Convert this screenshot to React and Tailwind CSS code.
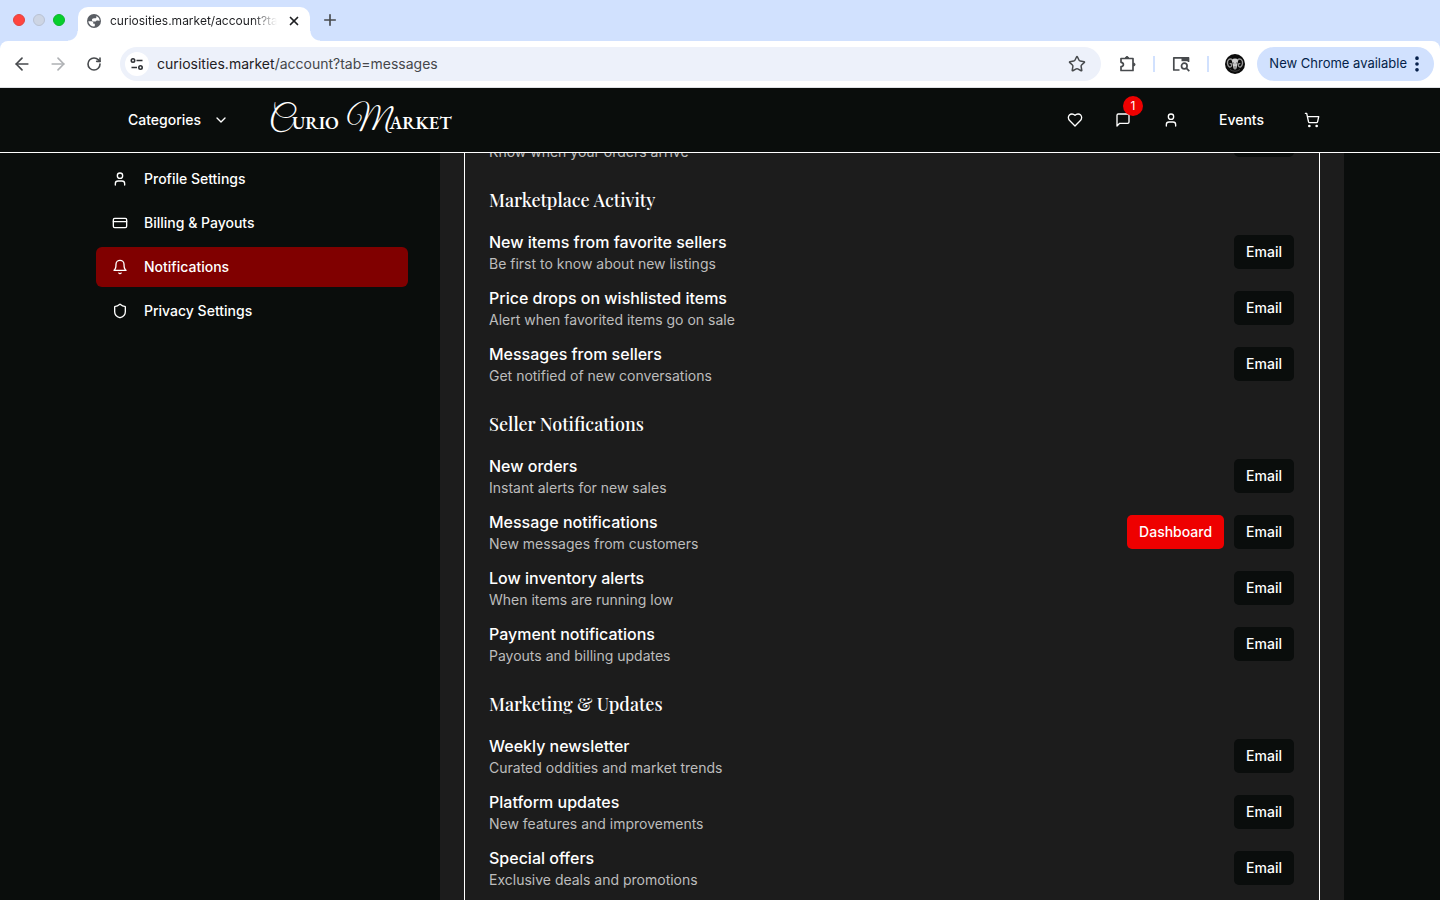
import {
  ArrowLeft, ArrowRight, RotateCw, X, Plus, Star, ChevronDown,
  User, ShoppingCart, CreditCard, Shield, EllipsisVertical,
} from "lucide-react";

const sections = [
  { rows: [[null, "Know when your orders arrive"]] },
  {
    title: "Marketplace Activity",
    rows: [
      ["New items from favorite sellers", "Be first to know about new listings"],
      ["Price drops on wishlisted items", "Alert when favorited items go on sale"],
      ["Messages from sellers", "Get notified of new conversations"],
    ],
  },
  {
    title: "Seller Notifications",
    rows: [
      ["New orders", "Instant alerts for new sales"],
      ["Message notifications", "New messages from customers", true],
      ["Low inventory alerts", "When items are running low"],
      ["Payment notifications", "Payouts and billing updates"],
    ],
  },
  {
    title: "Marketing & Updates",
    rows: [
      ["Weekly newsletter", "Curated oddities and market trends"],
      ["Platform updates", "New features and improvements"],
      ["Special offers", "Exclusive deals and promotions"],
    ],
  },
];

function LineIcon({ children }) {
  return (
    <svg width="16" height="16" viewBox="0 0 24 24" fill="none" stroke="currentColor" strokeWidth="2" strokeLinecap="round" strokeLinejoin="round">
      {children}
    </svg>
  );
}

function BellIcon() {
  return (
    <LineIcon>
      <path d="M6 8a6 6 0 0 1 12 0c0 7 3 9 3 9H3s3-2 3-9" />
      <path d="M10.3 21a1.94 1.94 0 0 0 3.4 0" />
    </LineIcon>
  );
}

function HeartIcon() {
  return (
    <LineIcon>
      <path d="M19 14c1.49-1.46 3-3.21 3-5.5A5.5 5.5 0 0 0 16.5 3c-1.76 0-3 .5-4.5 2-1.5-1.5-2.74-2-4.5-2A5.5 5.5 0 0 0 2 8.5c0 2.3 1.5 4.05 3 5.5l7 7Z" />
    </LineIcon>
  );
}

function MessageIcon() {
  return (
    <LineIcon>
      <path d="M21 15a2 2 0 0 1-2 2H7l-4 4V5a2 2 0 0 1 2-2h14a2 2 0 0 1 2 2z" />
    </LineIcon>
  );
}

const links = [
  ["Profile Settings", User],
  ["Billing & Payouts", CreditCard],
  ["Notifications", BellIcon],
  ["Privacy Settings", Shield],
];

function TuneIcon() {
  return (
    <svg width="14" height="12" viewBox="0 0 14 12" fill="none" stroke="#303236" strokeWidth="1.6">
      <circle cx="3" cy="2.5" r="1.7" />
      <path d="M6.5 2.5H12.5M1.5 9.5H7" />
      <circle cx="10.5" cy="9.5" r="1.7" />
    </svg>
  );
}

function GlobeIcon() {
  return (
    <svg width="14" height="14" viewBox="0 0 14 14">
      <circle cx="7" cy="7" r="7" fill="#5a5e64" />
      <path d="M1.3 7.2h3.2c1.3 0 1.8.8 1.8 1.8v.7h1.5v2.6a5.6 5.6 0 0 1-6.5-5.1zM7 4.2h1.2c.8 0 1.2-.6 1.2-1.3V1.9a5.6 5.6 0 0 1 3.2 5.2c-.5-.5-1-.7-1.7-.7H9.7L8.6 7.4H6.2c-.8 0-1.2-.6-1.2-1.3 0-1.2.7-1.9 2-1.9z" fill="#fff" />
    </svg>
  );
}

function PuzzleIcon() {
  return (
    <svg width="18" height="18" viewBox="0 0 18 18" fill="none" stroke="#474a4d" strokeWidth="1.7" strokeLinejoin="round">
      <path d="M2 3.5H14V15.5H2V11.7C3.6 11.5 4.4 10.7 4.4 9.5S3.6 7.5 2 7.3Z" />
      <path d="M6.5 3a1.5 1.5 0 0 1 3 0zM14.5 8a1.5 1.5 0 0 1 0 3z" fill="#474a4d" strokeWidth="1" />
    </svg>
  );
}

function PanelSearchIcon() {
  return (
    <svg width="18" height="16" viewBox="0 0 18 16" fill="none" stroke="#474a4d" strokeWidth="1.7">
      <path d="M7.5 14H1.8V1.8H16.5V6" strokeLinejoin="round" />
      <path d="M9.5 1.2h7.5v4H9.5z" fill="#474a4d" stroke="none" />
      <circle cx="12.3" cy="10" r="2.8" />
      <path d="M14.3 12.2L17.3 15.2" />
    </svg>
  );
}

function Avatar() {
  return (
    <svg width="20" height="20" viewBox="0 0 20 20">
      <circle cx="10" cy="10" r="10" fill="#0b0b0b" />
      <path d="M6.5 5.5Q10 3.5 13.5 5.5L12.5 9L11.5 14.5Q10 16.5 8.5 14.5L7.5 9Z" fill="#d0d0d0" />
      <path d="M7.5 6C5 3.5 2 6 2.5 9.5S5.5 14 6.5 12S5.5 9 4.8 10M12.5 6C15 3.5 18 6 17.5 9.5S14.5 14 13.5 12S14.5 9 15.2 10" fill="none" stroke="#979797" strokeWidth="1.4" />
      <path d="M8 8.5l1.3 1.2M12 8.5l-1.3 1.2M10 12v3" stroke="#333" strokeWidth=".7" />
      <path d="M5 15.5Q10 19 15 15.5" fill="none" stroke="#555" strokeWidth=".8" />
    </svg>
  );
}

function Browser() {
  return (
    <div className="shrink-0 bg-[#d1e1fe] text-[#1f2023]">
      <div className="flex h-[41px] items-end">
        <div className="flex h-10 items-center gap-2 self-start pr-3 pl-[13px]">
          <span className="size-3 rounded-full border border-[#e0443e] bg-[#ff453f]" />
          <span className="size-3 rounded-full border border-[#b9c2d3] bg-[#cdd5e4]" />
          <span className="size-3 rounded-full border border-[#0eb52c] bg-[#06cf2c]" />
        </div>
        <div className="relative ml-px flex h-[34px] w-[232px] items-center rounded-t-[10px] bg-white pr-2 pb-[6px] pl-[9px]">
          <span className="absolute bottom-0 -left-[10px] size-[10px] bg-[radial-gradient(circle_at_0_0,transparent_9px,white_10px)]" />
          <span className="absolute -right-[10px] bottom-0 size-[10px] bg-[radial-gradient(circle_at_100%_0,transparent_9px,white_10px)]" />
          <GlobeIcon />
          <span className="ml-[9px] w-[167px] overflow-hidden bg-linear-to-r from-[#1f2023] from-85% to-transparent bg-clip-text text-xs whitespace-nowrap text-transparent">
            curiosities.market/account?tab=messages
          </span>
          <button aria-label="Close tab" className="ml-auto flex size-4 items-center justify-center">
            <X size={14} strokeWidth={3} />
          </button>
        </div>
        <button aria-label="New tab" className="ml-3 flex h-10 w-4 items-center justify-center self-start">
          <Plus size={18} strokeWidth={2.2} color="#474a4d" className="shrink-0" />
        </button>
      </div>
      <div className="flex h-[47px] items-center rounded-t-[8px] border-b border-[#dfe1e5] bg-white pr-[6px] pl-3 text-[#474a4d]">
        <button aria-label="Back" className="w-5"><ArrowLeft size={20} strokeWidth={2} /></button>
        <button aria-label="Forward" className="ml-4 w-5 text-[#afb1b4]"><ArrowRight size={20} strokeWidth={2} /></button>
        <button aria-label="Reload" className="ml-4 flex w-5 justify-center"><RotateCw size={16} strokeWidth={2.4} /></button>
        <div className="ml-4 flex h-[34px] flex-1 items-center rounded-full bg-[#edf1fa] pr-[15px] pl-[5px]">
          <button aria-label="Site information" className="flex size-6 shrink-0 items-center justify-center rounded-full bg-white"><TuneIcon /></button>
          <a href="#address" className="ml-2 flex-1 text-sm whitespace-nowrap text-[#45474a]">
            <span className="text-[#1f2023]">curiosities.market</span>/account?tab=messages
          </a>
          <button aria-label="Bookmark"><Star size={18} strokeWidth={2} /></button>
        </div>
        <button aria-label="Extensions" className="ml-[18px]"><PuzzleIcon /></button>
        <span className="ml-4 h-4 w-[2px] bg-[#d1e1fe]" />
        <button aria-label="Search panel" className="ml-[17px]"><PanelSearchIcon /></button>
        <span className="ml-[17px] h-4 w-[2px] bg-[#d1e1fe]" />
        <button aria-label="Profile" className="ml-4"><Avatar /></button>
        <button className="ml-3 flex h-[34px] items-center rounded-full bg-[#d1e1fe] pr-[7px] pl-3 text-[13px] text-[#041e49]">
          New Chrome available
          <EllipsisVertical size={20} strokeWidth={2.4} />
        </button>
      </div>
    </div>
  );
}

function SiteHeader() {
  return (
    <header className="flex h-[65px] shrink-0 items-center border-b border-white pr-[120px] pl-32 text-sm font-medium">
      <button className="flex items-center gap-3">
        Categories
        <ChevronDown size={16} />
      </button>
      <a href="#home" className="ml-10 flex items-baseline gap-2 pt-1 font-['EB_Garamond','Liberation_Serif',serif] text-lg leading-10 font-semibold whitespace-nowrap">
        <span><span className="font-['Great_Vibes','Liberation_Serif',serif] text-[32px] leading-10 font-normal">C</span>URIO</span>
        <span><span className="font-['Great_Vibes','Liberation_Serif',serif] text-[32px] leading-10 font-normal">M</span>ARKET</span>
      </a>
      <nav className="ml-auto flex items-center">
        <a href="#favorites" aria-label="Favorites"><HeartIcon /></a>
        <a href="#messages" aria-label="Messages" className="relative ml-8">
          <MessageIcon />
          <span className="absolute -top-4 left-2 flex size-5 items-center justify-center rounded-full bg-[#ee0000] text-xs font-normal">1</span>
        </a>
        <a href="#account" aria-label="Account" className="ml-8"><User size={16} /></a>
        <a href="#events" className="ml-10">Events</a>
        <a href="#cart" aria-label="Cart" className="ml-10"><ShoppingCart size={16} /></a>
      </nav>
    </header>
  );
}

export default function App() {
  return (
    <div className="flex h-screen flex-col overflow-hidden bg-[#0a0d0c] font-[Inter,sans-serif] text-white">
      <Browser />
      <SiteHeader />
      <div className="flex min-h-0 flex-1 gap-8 px-24">
        <aside className="w-[312px] shrink-0 pt-[6px]">
          <nav className="flex flex-col gap-1 text-sm font-medium">
            {links.map(([label, Icon]) => (
              <a
                key={label}
                href="#settings"
                className={`flex h-10 items-center gap-4 rounded-md px-4 ${label === "Notifications" ? "bg-[#800000]" : ""}`}
              >
                <Icon size={16} />
                {label}
              </a>
            ))}
          </nav>
        </aside>
        <main className="min-w-0 flex-1 overflow-hidden bg-[#1c1c1c] px-6">
          <div className="-mt-[35px] flex flex-col gap-6 border-x border-white pr-[25px] pb-6 pl-6">
            {sections.map((s, i) => (
              <section key={i}>
                {s.title && (
                  <h3 className="mb-4 font-['Playfair_Display','Liberation_Serif',serif] text-lg leading-7 font-medium">{s.title}</h3>
                )}
                <div className="flex flex-col gap-3">
                  {s.rows.map(([title, text, dashboard]) => (
                    <div key={text} className="flex items-center justify-between">
                      <div className="flex min-h-11 flex-col justify-end">
                        {title && <h4 className="text-base leading-6 font-medium">{title}</h4>}
                        <p className="text-sm leading-5 text-[#bdbdbd]">{text}</p>
                      </div>
                      <div className="flex gap-[10px] text-sm font-medium">
                        {dashboard && <button className="h-[34px] rounded-[5px] bg-[#ee0000] px-3">Dashboard</button>}
                        <button className="h-[34px] rounded-[5px] bg-[#0a0d0c] px-3">Email</button>
                      </div>
                    </div>
                  ))}
                </div>
              </section>
            ))}
          </div>
        </main>
      </div>
    </div>
  );
}
